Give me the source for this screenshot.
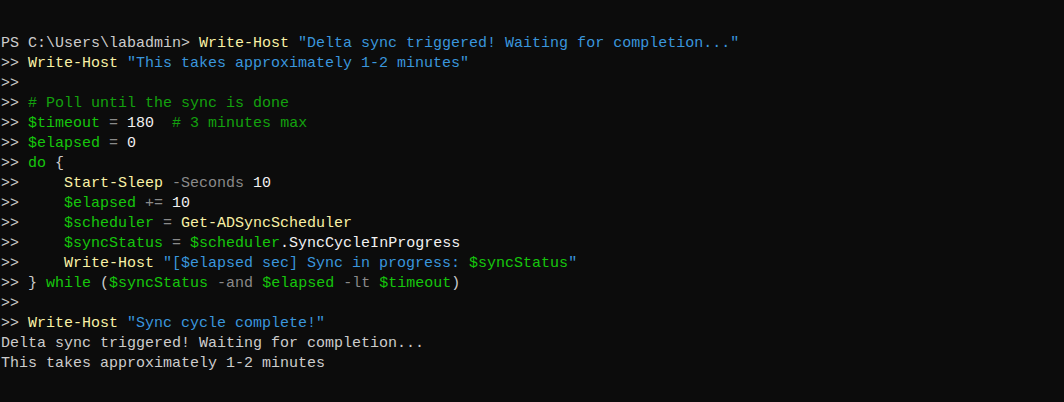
type Seg = [string, string]

const C = {
  txt: 'text-[#cccccc]',
  cmd: 'text-[#f9f1a5]',
  str: 'text-[#3a96dd]',
  cmt: 'text-[#13a10e]',
  var: 'text-[#16c60c]',
  kw: 'text-[#16c60c]',
  op: 'text-[#8a8a8a]',
  num: 'text-[#f2f2f2]',
}

const LINES: Seg[][] = [
  [
    [C.txt, 'PS C:\\Users\\labadmin> '],
    [C.cmd, 'Write-Host'],
    [C.txt, ' '],
    [C.str, '"Delta sync triggered! Waiting for completion..."'],
  ],
  [
    [C.txt, '>> '],
    [C.cmd, 'Write-Host'],
    [C.txt, ' '],
    [C.str, '"This takes approximately 1-2 minutes"'],
  ],
  [[C.txt, '>>']],
  [
    [C.txt, '>> '],
    [C.cmt, '# Poll until the sync is done'],
  ],
  [
    [C.txt, '>> '],
    [C.var, '$timeout'],
    [C.txt, ' '],
    [C.op, '='],
    [C.txt, ' '],
    [C.num, '180'],
    [C.txt, '  '],
    [C.cmt, '# 3 minutes max'],
  ],
  [
    [C.txt, '>> '],
    [C.var, '$elapsed'],
    [C.txt, ' '],
    [C.op, '='],
    [C.txt, ' '],
    [C.num, '0'],
  ],
  [
    [C.txt, '>> '],
    [C.kw, 'do'],
    [C.txt, ' {'],
  ],
  [
    [C.txt, '>>     '],
    [C.cmd, 'Start-Sleep'],
    [C.txt, ' '],
    [C.op, '-Seconds'],
    [C.txt, ' '],
    [C.num, '10'],
  ],
  [
    [C.txt, '>>     '],
    [C.var, '$elapsed'],
    [C.txt, ' '],
    [C.op, '+='],
    [C.txt, ' '],
    [C.num, '10'],
  ],
  [
    [C.txt, '>>     '],
    [C.var, '$scheduler'],
    [C.txt, ' '],
    [C.op, '='],
    [C.txt, ' '],
    [C.cmd, 'Get-ADSyncScheduler'],
  ],
  [
    [C.txt, '>>     '],
    [C.var, '$syncStatus'],
    [C.txt, ' '],
    [C.op, '='],
    [C.txt, ' '],
    [C.var, '$scheduler'],
    [C.num, '.SyncCycleInProgress'],
  ],
  [
    [C.txt, '>>     '],
    [C.cmd, 'Write-Host'],
    [C.txt, ' '],
    [C.str, '"[$elapsed sec] Sync in progress: '],
    [C.var, '$syncStatus'],
    [C.str, '"'],
  ],
  [
    [C.txt, '>> } '],
    [C.kw, 'while'],
    [C.txt, ' ('],
    [C.var, '$syncStatus'],
    [C.txt, ' '],
    [C.op, '-and'],
    [C.txt, ' '],
    [C.var, '$elapsed'],
    [C.txt, ' '],
    [C.op, '-lt'],
    [C.txt, ' '],
    [C.var, '$timeout'],
    [C.txt, ')'],
  ],
  [[C.txt, '>>']],
  [
    [C.txt, '>> '],
    [C.cmd, 'Write-Host'],
    [C.txt, ' '],
    [C.str, '"Sync cycle complete!"'],
  ],
  [[C.txt, 'Delta sync triggered! Waiting for completion...']],
  [[C.txt, 'This takes approximately 1-2 minutes']],
]

export default function App() {
  return (
    <div className="h-[402px] w-[1064px] overflow-hidden bg-[#0c0c0c] pl-[1px] pt-[34px] font-['Liberation_Mono',monospace] text-[15px] leading-[20px]">
      {LINES.map((line, i) => (
        <div key={i} className="h-[20px] whitespace-pre">
          {line.map(([cls, text], j) => (
            <span key={j} className={cls}>
              {text}
            </span>
          ))}
        </div>
      ))}
    </div>
  )
}
